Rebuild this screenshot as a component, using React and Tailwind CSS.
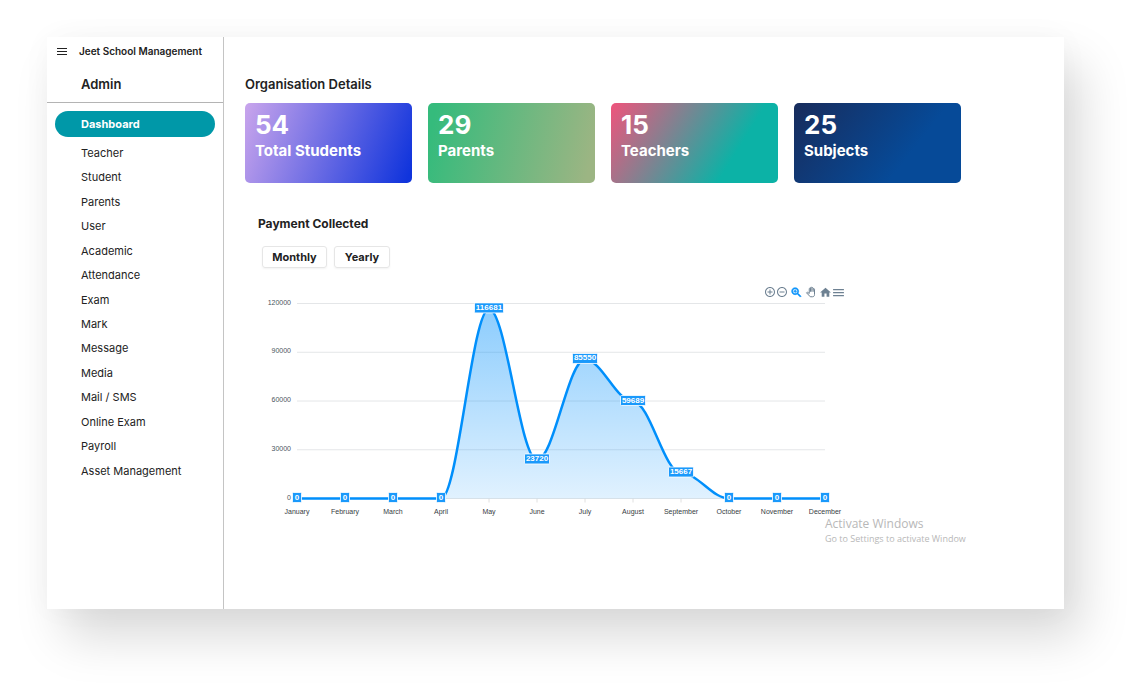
import { Fragment } from "react";

const navItems = [
  "Teacher", "Student", "Parents", "User", "Academic", "Attendance", "Exam",
  "Mark", "Message", "Media", "Mail / SMS", "Online Exam", "Payroll", "Asset Management",
];

const stats = [
  { value: 54, label: "Total Students", fill: "bg-[linear-gradient(110deg,#c9a5ec_0%,#1034dc_97%)]" },
  { value: 29, label: "Parents", fill: "bg-[linear-gradient(103deg,#35bb7c_5%,#9cb583_95%)]" },
  { value: 15, label: "Teachers", fill: "bg-[linear-gradient(122deg,#f0547c_0%,#0cb2a6_72%)]" },
  { value: 25, label: "Subjects", fill: "bg-[linear-gradient(128deg,#182c5c_0%,#064a98_68%)]" },
];

const payments = [
  ["January", 0], ["February", 0], ["March", 0], ["April", 0], ["May", 116681], ["June", 23720],
  ["July", 85550], ["August", 59689], ["September", 15667], ["October", 0], ["November", 0], ["December", 0],
];

const LEFT = 39;
const STEP = 48;
const BASE = 214.5;
const HEIGHT = 195;
const toX = (i) => LEFT + i * STEP;
const toY = (v) => BASE - (v / 120000) * HEIGHT;

const line = payments
  .map(([, v], i) => {
    if (i === 0) return `M${toX(0)},${toY(v)}`;
    const pull = STEP * 0.35;
    return `C${toX(i - 1) + pull},${toY(payments[i - 1][1])} ${toX(i) - pull},${toY(v)} ${toX(i)},${toY(v)}`;
  })
  .join(" ");

function PaymentChart() {
  return (
    <svg viewBox="0 0 590 240" className="block h-[240px] w-[590px] font-['Liberation_Sans',Arial,sans-serif]" role="img" aria-label="Payment collected per month">
      <defs>
        <linearGradient id="area" x1="0" y1="0" x2="0" y2="1">
          <stop offset="0" stopColor="#008ffb" stopOpacity="0.45" />
          <stop offset="1" stopColor="#008ffb" stopOpacity="0.12" />
        </linearGradient>
      </defs>
      {[0, 30000, 60000, 90000, 120000].map((t) => (
        <Fragment key={t}>
          <line x1={LEFT} x2={toX(11)} y1={toY(t)} y2={toY(t)} stroke="#e4e6e8" />
          <text x={LEFT - 6} y={toY(t) + 1} textAnchor="end" fontSize="7" fill="#4a5560">{t}</text>
        </Fragment>
      ))}
      {payments.map(([m], i) => (
        <Fragment key={m}>
          <line x1={toX(i)} x2={toX(i)} y1={BASE} y2={BASE + 4} stroke="#e0e0e0" />
          <text x={toX(i)} y={BASE + 15} textAnchor="middle" fontSize="7" fill="#373d3f">{m}</text>
        </Fragment>
      ))}
      <path d={`${line} V${BASE} H${LEFT} Z`} fill="url(#area)" />
      <path d={line} fill="none" stroke="#008ffb" strokeWidth="2.5" />
      {payments.map(([m, v], i) => {
        const w = v === 0 ? 9 : v > 99999 ? 29 : 25;
        return (
          <Fragment key={m}>
            <rect x={toX(i) - w / 2} y={toY(v) - 6} width={w} height="10" rx="1" fill="#1a99fb" stroke="#fff" strokeOpacity="0.8" />
            <text x={toX(i)} y={toY(v) + 1} textAnchor="middle" fontSize="8" fontWeight="700" fill="#fff">{v}</text>
          </Fragment>
        );
      })}
    </svg>
  );
}

function ToolButton({ label, className, children }) {
  return (
    <button type="button" aria-label={label} className={className}>
      <svg viewBox="0 0 24 24" className="size-full" fill="currentColor">{children}</svg>
    </button>
  );
}

function ChartToolbar() {
  return (
    <div className="flex h-3 items-center text-[#6e8192]">
      <ToolButton label="Zoom in" className="size-3">
        <path d="M13 7h-2v4H7v2h4v4h2v-4h4v-2h-4V7zm-1-5C6.48 2 2 6.48 2 12s4.48 10 10 10 10-4.48 10-10S17.52 2 12 2zm0 18c-4.41 0-8-3.59-8-8s3.59-8 8-8 8 3.59 8 8-3.59 8-8 8z" />
      </ToolButton>
      <ToolButton label="Zoom out" className="size-3">
        <path d="M7 11v2h10v-2H7zm5-9C6.48 2 2 6.48 2 12s4.48 10 10 10 10-4.48 10-10S17.52 2 12 2zm0 18c-4.41 0-8-3.59-8-8s3.59-8 8-8 8 3.59 8 8-3.59 8-8 8z" />
      </ToolButton>
      <ToolButton label="Selection zoom" className="ml-0.5 size-[13px] text-[#008ffb]">
        <path d="M15.5 14h-.79l-.28-.27C15.41 12.59 16 11.11 16 9.5 16 5.91 13.09 3 9.5 3S3 5.91 3 9.5 5.91 16 9.5 16c1.61 0 3.09-.59 4.23-1.57l.27.28v.79l5 4.99L20.49 19l-4.99-5zm-6 0C7.01 14 5 11.99 5 9.5S7.01 5 9.5 5 14 7.01 14 9.5 11.99 14 9.5 14zm2.5-4h-2v2H9v-2H7V9h2V7h1v2h2v1z" stroke="currentColor" strokeWidth="1" />
      </ToolButton>
      <ToolButton label="Panning" className="ml-0.5 size-3">
        <g fill="none" stroke="currentColor" strokeWidth="2" strokeLinejoin="round">
          <path d="M3 13.500l2-1 3.500 2.500V5.500c0-1.600 2.500-1.600 2.500 0V3.500c0-1.600 2.700-1.600 2.700 0v1c0-1.600 2.700-1.600 2.700 0v2c0-1.600 2.600-1.600 2.600 0V17c0 3-1.500 4.500-4 4.500h-4.500L3 13.500z" />
          <path d="M11 5v6.500M13.700 4.500v7M16.400 6v5.500" />
        </g>
      </ToolButton>
      <ToolButton label="Reset zoom" className="ml-0.5 size-[13px]">
        <path d="M10 20v-6h4v6h5v-8h3L12 3 2 12h3v8z" />
      </ToolButton>
      <ToolButton label="Menu" className="size-[13px]">
        <path d="M2 19h20v-2.500H2V19zm0-5.500h20V11H2v2.500zm0-8V8h20V5.500H2z" />
      </ToolButton>
    </div>
  );
}

function Sidebar() {
  return (
    <aside className="w-[177px] shrink-0 border-r border-[#c4c4c4]">
      <div className="flex h-[29px] items-center gap-3 pl-2.5">
        <button type="button" aria-label="Toggle menu" className="h-2 w-2.5">
          <svg viewBox="0 0 10 8" className="block h-2 w-2.5" stroke="#222" strokeWidth="1">
            <path d="M0 .500h10M0 3.500h10M0 6.500h10" />
          </svg>
        </button>
        <span className="text-[10px] font-semibold whitespace-nowrap">Jeet School Management</span>
      </div>
      <h2 className="h-[37px] border-b border-[#b4b4b4] pt-2 pl-[34px] text-[13px] leading-5 font-semibold">Admin</h2>
      <nav className="px-2 pt-2 text-[11px]">
        <a href="#dashboard" className="flex h-[26px] items-center rounded-full bg-[#0098a8] pl-[26px] font-bold text-white">Dashboard</a>
        <ul className="mt-1 grid h-[342px] auto-rows-fr">
          {navItems.map((item) => (
            <li key={item} className="flex items-center pl-[26px]">
              <a href={"#" + item.toLowerCase().replace(/\W+/g, "-")}>{item}</a>
            </li>
          ))}
        </ul>
      </nav>
    </aside>
  );
}

export default function App() {
  return (
    <div className="flex min-h-screen bg-white pt-[37px] pr-[77px] pb-[87px] pl-[47px] font-['Inter',sans-serif] text-[#222]">
      <div className="flex min-w-0 flex-1 bg-white shadow-[17px_28px_46px_rgba(0,0,0,0.15),0_0_30px_rgba(0,0,0,0.03)]">
        <Sidebar />
        <main className="min-w-0 flex-1 pt-[37px] pr-[103px] pl-[21px]">
          <h1 className="text-[13px] leading-5 font-semibold">Organisation Details</h1>
          <section className="mt-[9px] grid grid-cols-4 gap-4">
            {stats.map((s) => (
              <div key={s.label} className={"h-20 rounded-[5px] pt-2 pl-2.5 text-white " + s.fill}>
                <div className="text-[26px] leading-7 font-bold">{s.value}</div>
                <div className="text-[15px] leading-6 font-bold whitespace-nowrap">{s.label}</div>
              </div>
            ))}
          </section>

          <section className="pt-[31px] pl-[13px]">
            <h2 className="text-xs leading-5 font-bold">Payment Collected</h2>
            <div className="mt-3 flex gap-[7px] pl-1 text-[11px] font-bold">
              <button type="button" className="h-[22px] w-[65px] rounded-[3px] border border-[#e6e6e6] shadow-xs">Monthly</button>
              <button type="button" className="h-[22px] w-14 rounded-[3px] border border-[#e6e6e6] shadow-xs">Yearly</button>
            </div>
            <div className="mt-[18px] flex w-[587px] justify-end">
              <ChartToolbar />
            </div>
            <div className="-mt-[14px]">
              <PaymentChart />
            </div>
          </section>

          <div className="-mt-2 flex justify-end font-['Open_Sans','Noto_Sans',sans-serif] text-[#b8b8b8]">
            <div className="w-[136px] whitespace-nowrap">
              <p className="text-xs leading-4">Activate Windows</p>
              <p className="text-[9px] leading-[14px]">Go to Settings to activate Window</p>
            </div>
          </div>
        </main>
      </div>
    </div>
  );
}
